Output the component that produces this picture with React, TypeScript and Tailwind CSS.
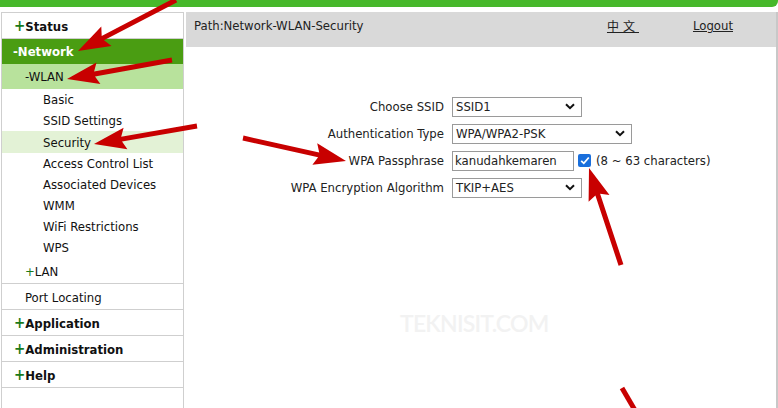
import React from 'react'

const font = "font-['Tahoma','DejaVu_Sans_Condensed','DejaVu_Sans',sans-serif]"

type Pt = [number, number]

function arrowPoints(s: Pt, t: Pt, w = 5, len = 28, half = 11) {
    const dx = t[0] - s[0]
    const dy = t[1] - s[1]
    const d = Math.hypot(dx, dy)
    const ux = dx / d
    const uy = dy / d
    const nx = -uy
    const ny = ux
    const bx = t[0] - ux * len
    const by = t[1] - uy * len
    const wx = bx - ux * 4
    const wy = by - uy * 4
    const pts: Pt[] = [
        [s[0] + nx * w / 2, s[1] + ny * w / 2],
        [bx + nx * w / 2, by + ny * w / 2],
        [wx + nx * half, wy + ny * half],
        t,
        [wx - nx * half, wy - ny * half],
        [bx - nx * w / 2, by - ny * w / 2],
        [s[0] - nx * w / 2, s[1] - ny * w / 2],
    ]
    return pts.map((p) => p.map((v) => v.toFixed(1)).join(',')).join(' ')
}

const arrows: [Pt, Pt][] = [
    [[176, 0], [78, 51]],
    [[172, 60], [67, 79]],
    [[197, 126], [94, 144]],
    [[243, 138], [346, 161]],
    [[621, 265], [589, 168]],
]

function Select({ value, width }: { value: string; width: string }) {
    return (
        <div className={`${width} h-[20px] border border-[#9a9a9a] bg-white flex items-center justify-between pl-[3px] pr-[6px]`}>
            <span>{value}</span>
            <svg width="10" height="7" viewBox="0 0 10 7">
                <path d="M1 1.2 L5 5.2 L9 1.2" fill="none" stroke="#111" strokeWidth="2" />
            </svg>
        </div>
    )
}

function FormRow({ label, children }: { label: string; children: React.ReactNode }) {
    return (
        <div className="flex items-center h-[27px]">
            <div className="w-[266px] pr-[8px] text-right">{label}</div>
            {children}
        </div>
    )
}

function SubItem({ label, active }: { label: string; active?: boolean }) {
    return (
        <div className={`flex items-center pl-[41px] ${active ? 'h-[22px] pt-[2px] bg-[#e3f2d6]' : 'h-[21px]'}`}>{label}</div>
    )
}

function MainItem({ label }: { label: string }) {
    return (
        <div className="h-[26px] flex items-center pl-[12px] pt-[2px] border-b border-[#cfcfcf] font-bold">
            <span className="text-[#1a7a1a] text-[15px] leading-none">+</span>
            {label}
        </div>
    )
}

export default function App() {
    return (
        <div className={`relative w-[778px] h-[408px] overflow-hidden bg-white text-[13px] text-[#111] ${font}`}>
            <div className="h-[7px] bg-[#47b82b] rounded-br-[6px]" />
            <div className="flex mt-[5px] h-[396px]">
                <div className="ml-[1px] w-[183px] border-x border-t border-[#cfcfcf] flex flex-col">
                    <MainItem label="Status" />
                    <div className="h-[25px] flex items-center pl-[11px] bg-[#4a9d12] text-white font-bold">-Network</div>
                    <div className="h-[25px] flex items-center pl-[23px] bg-[#b8e29c]">-WLAN</div>
                    <SubItem label="Basic" />
                    <SubItem label="SSID Settings" />
                    <SubItem label="Security" active />
                    <SubItem label="Access Control List" />
                    <SubItem label="Associated Devices" />
                    <SubItem label="WMM" />
                    <SubItem label="WiFi Restrictions" />
                    <SubItem label="WPS" />
                    <div className="h-[26px] flex items-center pl-[23px] pt-[2px] border-b border-[#cfcfcf]">
                        <span className="text-[#1a7a1a]">+</span>LAN
                    </div>
                    <div className="h-[26px] flex items-center pl-[23px] pt-[2px] border-b border-[#cfcfcf]">Port Locating</div>
                    <MainItem label="Application" />
                    <MainItem label="Administration" />
                    <MainItem label="Help" />
                </div>
                <div className="flex-1 ml-[2px] border-r-2 border-[#c8c8c8] flex flex-col">
                    <div className="h-[35px] bg-[#d9d9d9] flex items-center pl-[8px] pb-[7px] text-[#222]">
                        <span>Path:Network-WLAN-Security</span>
                        <span className="ml-auto underline font-['Noto_Sans_CJK_SC',sans-serif] text-[12px] tracking-[4px]">中文</span>
                        <span className="ml-[54px] mr-[43px] underline">Logout</span>
                    </div>
                    <div className="pt-[46px] text-[#222]">
                        <FormRow label="Choose SSID">
                            <Select value="SSID1" width="w-[130px]" />
                        </FormRow>
                        <FormRow label="Authentication Type">
                            <Select value="WPA/WPA2-PSK" width="w-[180px]" />
                        </FormRow>
                        <FormRow label="WPA Passphrase">
                            <div className="w-[122px] h-[20px] border border-[#9a9a9a] flex items-center pl-[2px]">kanudahkemaren</div>
                            <div className="ml-[4px] w-[13px] h-[13px] rounded-[2px] bg-[#1a6fdc] flex items-center justify-center">
                                <svg width="10" height="9" viewBox="0 0 10 9">
                                    <path d="M1.2 4.8 L3.8 7.3 L8.8 1.5" fill="none" stroke="#fff" strokeWidth="1.8" />
                                </svg>
                            </div>
                            <span className="ml-[5px]">(8 ~ 63 characters)</span>
                        </FormRow>
                        <FormRow label="WPA Encryption Algorithm">
                            <Select value="TKIP+AES" width="w-[130px]" />
                        </FormRow>
                    </div>
                    <div className="mt-[105px] ml-[214px] font-['Lato',sans-serif] font-semibold text-[23px] text-[#f2f2f2] tracking-[-0.8px]">
                        TEKNISIT.COM
                    </div>
                </div>
            </div>
            <svg className="absolute inset-0 pointer-events-none" width="778" height="408" viewBox="0 0 778 408">
                {arrows.map(([s, t], i) => (
                    <polygon key={i} points={arrowPoints(s, t)} fill="#c80000" />
                ))}
                <line x1="622" y1="388" x2="636" y2="412" stroke="#c80000" strokeWidth="5" />
            </svg>
        </div>
    )
}
